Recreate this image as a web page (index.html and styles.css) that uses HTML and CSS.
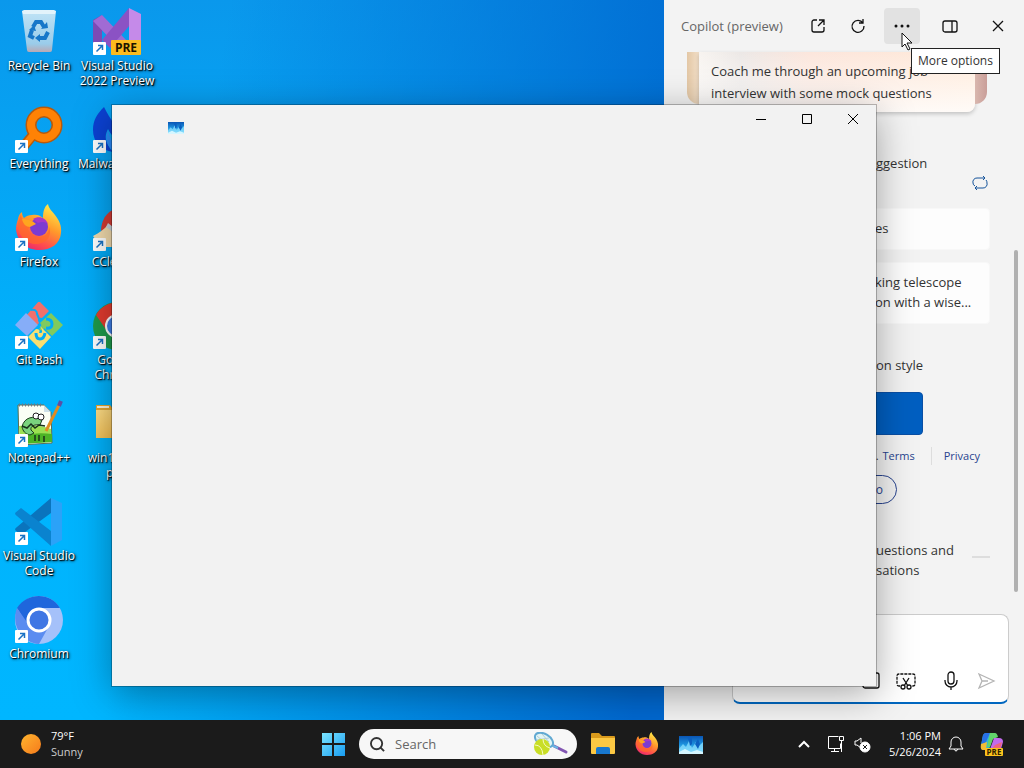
FILE: index.html
```html
<!DOCTYPE html>
<html lang="en">
<head>
    <meta charset="UTF-8">
    <meta name="viewport" content="width=device-width, initial-scale=1.0">
    <title>Desktop</title>
    <link rel="stylesheet" href="styles.css">
</head>
<body>
    <!-- Shared shapes -->
    <svg class="defs" aria-hidden="true">
        <defs>
            <linearGradient id="fox" x1="0.8" y1="0" x2="0.3" y2="1">
                <stop offset="0" stop-color="#fff04a"/>
                <stop offset="0.45" stop-color="#ff9a2b"/>
                <stop offset="0.8" stop-color="#ff4a4f"/>
                <stop offset="1" stop-color="#e8296e"/>
            </linearGradient>
            <linearGradient id="tile" x1="0" y1="0" x2="0" y2="1">
                <stop offset="0" stop-color="#0a55b4"/>
                <stop offset="0.5" stop-color="#1e96e0"/>
                <stop offset="1" stop-color="#9be8ff"/>
            </linearGradient>
            <linearGradient id="win" x1="0" y1="0" x2="1" y2="1">
                <stop offset="0" stop-color="#7be4ff"/>
                <stop offset="1" stop-color="#189cf0"/>
            </linearGradient>
            <linearGradient id="sun" x1="0" y1="0" x2="1" y2="1">
                <stop offset="0" stop-color="#ffb52e"/>
                <stop offset="1" stop-color="#f57a1c"/>
            </linearGradient>
            <linearGradient id="bin" x1="0" y1="0" x2="0" y2="1">
                <stop offset="0" stop-color="#bfe3f6"/>
                <stop offset="0.8" stop-color="#9accea"/>
                <stop offset="1" stop-color="#b9a9b4"/>
            </linearGradient>
            <linearGradient id="yellow" x1="0" y1="0" x2="1" y2="1">
                <stop offset="0" stop-color="#ffe08a"/>
                <stop offset="1" stop-color="#efae35"/>
            </linearGradient>
            <symbol id="shortcut" viewBox="0 0 13 13">
                <rect width="13" height="13" rx="1" fill="#fff"/>
                <path d="M3.5 9.5 9 4M5 3.5h4.5V8" fill="none" stroke="#1a72c4" stroke-width="1.5"/>
            </symbol>
            <symbol id="firefox" viewBox="0 0 48 48">
                <path d="M3 15c1-5 3-6 4-7 0 3 1 5 2 6 2-2 5-3 8-3 4-1 8 0 11 3 0-6 1-11 5-14 1 5 4 7 7 11 4 5 7 11 6 18C45 40 36 46 24 46 11 46 2 37 1 25c0-4 1-7 2-10z" fill="url(#fox)"/>
                <path d="M6 10c0 4 2 6 4 6 4-1 7 1 10 4l-7 5c2 5 6 8 11 8 6 0 10-4 10-10 4 10-4 17-13 17S2 32 3 19z" fill="#ff6a28" opacity="0.7"/>
                <circle cx="24" cy="23" r="9" fill="#7c3bd0"/>
                <path d="M18 15c6-4 13-1 15 5-4-3-7-2-10-1z" fill="#a638c9"/>
                <path d="M7 15c5 0 10 1 14 5l-6 3c-4 0-7-3-8-8z" fill="#ffa51f"/>
            </symbol>
            <symbol id="photo" viewBox="0 0 24 18">
                <rect width="24" height="18" fill="url(#tile)"/>
                <path d="M0 13l4-5 3 3 3-6 3 7 4-6 3 4 4-4v12H0z" fill="#7fd8fb" opacity="0.85"/>
                <path d="M0 16l6-3 6 3 6-2 6 2v2H0z" fill="#d5f6ff"/>
                <path d="M8 1l2 4 1 5 2-2V2zM16 8l3-5 2 5-2 5z" fill="#0b5fc0"/>
            </symbol>
        </defs>
    </svg>

    <main class="desktop">
        <!-- Desktop shortcuts -->
        <nav class="icons" aria-label="Desktop icons">
            <button class="shortcut" type="button">
                <svg viewBox="0 0 48 48">
                    <path d="M7 3h34l-4 39q0 2-2 2H14q-2 0-2-2z" fill="url(#bin)"/>
                    <path d="M7 3l2-1h30l2 1-1 3H8z" fill="#e2f3fb"/>
                    <g fill="none" stroke="#1777c9" stroke-width="4">
                        <path d="M18 19l3-5h5l3 5M33 24l-3 6h-6M19 30l-4-2 2-6"/>
                    </g>
                    <path d="M26 21l7-1-1-6zM25 26v8l-5-4zM14 22l7 1-2-6z" fill="#1777c9"/>
                </svg>
                <span>Recycle Bin</span>
            </button>
            <button class="shortcut" type="button">
                <svg viewBox="0 0 48 48">
                    <path d="M0 12l9-5v28l-9 2z" fill="#7c4bb5"/>
                    <path d="M0 13l9-6 27 28-7 8z" fill="#a06bd4"/>
                    <path d="M9 32 36 0l1 17-20 23z" fill="#8b52c4"/>
                    <path d="M36 0l12 6v34H36z" fill="#c58ae9"/>
                    <use href="#shortcut" y="34" width="13" height="13"/>
                    <rect x="18" y="32" width="30" height="15" rx="1" fill="#fcbb1f"/>
                    <text x="33" y="44" class="pre-large">PRE</text>
                </svg>
                <span>Visual Studio 2022 Preview</span>
            </button>
            <button class="shortcut" type="button">
                <svg viewBox="0 0 48 48">
                    <path d="M18 29l-9 11" stroke="#b65a0d" stroke-width="10"/>
                    <circle cx="29" cy="19" r="13" fill="none" stroke="#b65a0d" stroke-width="11"/>
                    <circle cx="29" cy="19" r="13" fill="none" stroke="#ff8205" stroke-width="8"/>
                    <path d="M19 28l-9 11" stroke="#ff8205" stroke-width="7"/>
                    <use href="#shortcut" y="34" width="13" height="13"/>
                </svg>
                <span>Everything</span>
            </button>
            <button class="shortcut" type="button">
                <svg viewBox="0 0 48 48">
                    <path d="M11 1C4 8 0 14 0 24c0 12 8 20 20 22-8-9-9-16-5-23 3 6 6 9 12 11C25 20 17 14 11 1z" fill="#0b42d4"/>
                    <path d="M15 24c-3 8-2 15 6 22h8c-8-6-12-12-14-22z" fill="#2c8bfa"/>
                    <use href="#shortcut" y="34" width="13" height="13"/>
                </svg>
                <span>Malwarebytes</span>
            </button>
            <button class="shortcut" type="button">
                <svg viewBox="0 0 48 48">
                    <use href="#firefox" width="48" height="48"/>
                    <use href="#shortcut" y="34" width="13" height="13"/>
                </svg>
                <span>Firefox</span>
            </button>
            <button class="shortcut" type="button">
                <svg viewBox="0 0 48 48">
                    <path d="M30 4C16 4 9 13 8 26l9 10 18 6z" fill="#d43b34"/>
                    <path d="M0 32c6-3 10-6 15-11l15 6-8 16H8z" fill="#f3dcae"/>
                    <path d="M15 19l5 4 8 4-4 4-11-8z" fill="#c9d3dc"/>
                    <use href="#shortcut" y="34" width="13" height="13"/>
                </svg>
                <span>CCleaner</span>
            </button>
            <button class="shortcut" type="button">
                <svg viewBox="0 0 48 48">
                    <path d="M24-1l10 10-7 7q-6-1-3 5l-3 3-10-10z" fill="#f0706c"/>
                    <path d="M16 8q6-1 6 4l3 7" fill="none" stroke="#00acf9" stroke-width="2"/>
                    <path d="M11 11l12 12-11 11L0 23z" fill="#86adf8"/>
                    <path d="M36 11l12 12-11 11-8-8q-1 5-5 1 4-4 1-6z" fill="#80ca5e"/>
                    <path d="M31 17q6 0 6 5t-6 4" fill="none" stroke="#00acf9" stroke-width="3"/>
                    <path d="M25 24l11 11-11 12-12-12 8-8q5 0 3 4 6 1 1-7z" fill="#f9df71"/>
                    <path d="M21 31q0 6 4 6t5-6" fill="none" stroke="#00acf9" stroke-width="3"/>
                    <use href="#shortcut" y="34" width="13" height="13"/>
                </svg>
                <span>Git Bash</span>
            </button>
            <button class="shortcut" type="button">
                <svg viewBox="0 0 48 48">
                    <circle cx="24" cy="24" r="24" fill="#1f9b4c"/>
                    <path d="M3 13C12-3 36-4 45 13H24L14 29z" fill="#e33b2e"/>
                    <path d="M45 13c7 16-3 34-21 35l10-18V13z" fill="#fdd03c"/>
                    <circle cx="24" cy="24" r="11" fill="#3f7fe8" stroke="#fff" stroke-width="2"/>
                    <use href="#shortcut" y="34" width="13" height="13"/>
                </svg>
                <span>Google Chrome</span>
            </button>
            <button class="shortcut" type="button">
                <svg viewBox="0 0 48 48">
                    <path d="M3 5h26l7 7 1 31-33 2z" fill="#fafff5" stroke="#5a6d52"/>
                    <path d="M4 26q15-3 32 3v13L5 44z" fill="#9be052"/>
                    <path d="M5 36q15-4 32-2v8L5 44z" fill="#4cb326"/>
                    <path d="M4 5h24" stroke="#6f7c86" stroke-width="3" stroke-dasharray="1 2"/>
                    <path d="M29 5v7h7z" fill="#cde0e8"/>
                    <path d="M7 27c2-10 12-12 20-7l-2 5c-5-1-10 1-9 5l3 3-4 2c-5-1-7-4-8-8z" fill="#7ad37d" stroke="#1d3c1c"/>
                    <path d="M7 26l5 2 4-4 4 4 4-3 6 1M20 35v6m4-6v6m5-5v6" fill="none" stroke="#18321a" stroke-width="1.5"/>
                    <circle cx="21" cy="16" r="3" fill="#fff" stroke="#222"/>
                    <circle cx="26" cy="17" r="3" fill="#fff" stroke="#222"/>
                    <path d="M45 3 31 31" stroke="#e08a21" stroke-width="3"/>
                    <path d="M46 1l-2 5" stroke="#5a4fa6" stroke-width="4"/>
                    <use href="#shortcut" y="34" width="13" height="13"/>
                </svg>
                <span>Notepad++</span>
            </button>
            <button class="shortcut" type="button">
                <svg viewBox="0 0 48 48">
                    <path d="M3 5h14l4 5h24v28H3z" fill="#e5a52e"/>
                    <path d="M3 10h42v28H3z" fill="url(#yellow)"/>
                    <path d="M4 7h12" stroke="#fff4d8" stroke-width="2"/>
                </svg>
                <span>win11-app<br>pics</span>
            </button>
            <button class="shortcut" type="button">
                <svg viewBox="0 0 48 48">
                    <path d="M36 0l11 5v37l-11 6z" fill="#2ba2f8"/>
                    <path d="M36 0v15L6 37l-6-5q0-2 2-3z" fill="#0a74bd"/>
                    <path d="M0 15l6-5 30 23v15L2 18q-2-1-2-3z" fill="#0a83cf"/>
                    <use href="#shortcut" y="34" width="13" height="13"/>
                </svg>
                <span>Visual Studio Code</span>
            </button>
            <span></span>
            <button class="shortcut" type="button">
                <svg viewBox="0 0 48 48">
                    <circle cx="24" cy="24" r="24" fill="#a5c1fa"/>
                    <path d="M2 12C12-4 36-4 45 12H24L13 30z" fill="#1f66dc"/>
                    <path d="M2 12c-6 15 3 34 22 36l10-18-20-1z" fill="#5b8cf0"/>
                    <circle cx="24" cy="24" r="11" fill="#3f76e4" stroke="#fff" stroke-width="3"/>
                    <use href="#shortcut" y="34" width="13" height="13"/>
                </svg>
                <span>Chromium</span>
            </button>
        </nav>

        <!-- Copilot side panel -->
        <aside class="copilot">
            <header class="copilot-header">
                <h1>Copilot (preview)</h1>
                <div class="copilot-tools">
                    <button type="button" aria-label="Open in browser">
                        <svg viewBox="0 0 16 16"><path d="M7 2H4a2 2 0 0 0-2 2v8a2 2 0 0 0 2 2h8a2 2 0 0 0 2-2V9M9 2h5v5M14 2 8 8"/></svg>
                    </button>
                    <button type="button" aria-label="Refresh">
                        <svg viewBox="0 0 16 16"><path d="M13 5a6 6 0 1 0 1 3M13 1v4H9"/></svg>
                    </button>
                </div>
                <div class="copilot-tools wide">
                    <button type="button" class="active" aria-label="More">
                        <svg viewBox="0 0 16 16"><path d="M2 8h0M8 8h0M14 8h0" stroke-width="3" stroke-linecap="round"/></svg>
                        <span class="tooltip">More options</span>
                        <svg class="cursor" viewBox="0 0 12 19"><path d="M1 1v14l3-3 3 6 2-1-3-6h5z"/></svg>
                    </button>
                    <button type="button" aria-label="Dock panel">
                        <svg viewBox="0 0 16 16"><rect x="1" y="3" width="14" height="11" rx="2"/><path d="M10 3v11"/></svg>
                    </button>
                    <button type="button" aria-label="Close panel">
                        <svg viewBox="0 0 16 16"><path d="M3 3l10 10M13 3 3 13"/></svg>
                    </button>
                </div>
            </header>

            <div class="copilot-body">
                <div class="carousel">
                    <span class="peek peach"></span>
                    <p class="prompt">Coach me through an upcoming job interview with some mock questions</p>
                    <span class="peek rose"></span>
                </div>

                <div class="suggest">
                    <p class="line">ggestion</p>
                    <button type="button" class="swap" aria-label="Other suggestions">
                        <svg viewBox="0 0 16 16"><path d="M11 1l2 2-2 2M13 3H5a4 4 0 0 0-4 5q0 2 2 3M5 11l-2 2 2 2M3 13h8a4 4 0 0 0 4-5q0-2-1-3"/></svg>
                    </button>
                </div>
                <button type="button" class="card">es</button>
                <button type="button" class="card">king telescope<br>on with a wise...</button>

                <p class="line style-title">on style</p>
                <button type="button" class="style-choice" aria-label="Conversation style"></button>
                <div class="links">
                    <span>.</span>
                    <a href="#">Terms</a>
                    <a href="#" class="privacy">Privacy</a>
                </div>
                <button type="button" class="pill">o</button>
                <div class="notice">
                    <p class="line">uestions and<br>sations</p>
                    <span class="dash"></span>
                </div>
                <span class="scrollbar"></span>
            </div>

            <form class="composer">
                <textarea aria-label="Ask me anything"></textarea>
                <div class="composer-tools">
                    <button type="button" aria-label="Add an image">
                        <svg viewBox="0 0 20 20"><rect x="2" y="2" width="16" height="15" rx="2"/></svg>
                    </button>
                    <button type="button" aria-label="Screenshot">
                        <svg viewBox="0 0 20 20"><path d="M4 15H3q-2 0-2-2V5q0-2 2-2h14q2 0 2 2v8q0 2-2 2h-1" stroke-dasharray="3 1"/><path d="M7 7l5 8M13 7l-5 8"/><circle cx="7" cy="16" r="2"/><circle cx="13" cy="16" r="2"/></svg>
                    </button>
                    <button type="button" class="mic" aria-label="Use microphone">
                        <svg viewBox="0 0 20 20"><rect x="7" y="1" width="6" height="12" rx="3"/><path d="M4 9v1a6 6 0 0 0 12 0V9M10 16v3"/></svg>
                    </button>
                    <button type="submit" class="send" aria-label="Submit">
                        <svg viewBox="0 0 20 20"><path d="M3 3l15 7-15 7 3-7zM6 10h6"/></svg>
                    </button>
                </div>
            </form>
        </aside>

        <!-- App window that is still loading -->
        <section class="window" aria-label="App window">
            <header class="titlebar">
                <svg class="app-icon" viewBox="0 0 24 18"><use href="#photo" width="24" height="18"/></svg>
                <div class="window-buttons">
                    <button type="button" aria-label="Minimize"><svg viewBox="0 0 12 12"><path d="M1 6.5h10"/></svg></button>
                    <button type="button" aria-label="Maximize"><svg viewBox="0 0 12 12"><path d="M1.5 1.5h9v9h-9z"/></svg></button>
                    <button type="button" aria-label="Close"><svg viewBox="0 0 12 12"><path d="M1 1l10 10M11 1 1 11"/></svg></button>
                </div>
            </header>
        </section>
    </main>

    <!-- Taskbar -->
    <footer class="taskbar">
        <button type="button" class="weather">
            <svg viewBox="0 0 20 20"><circle cx="10" cy="10" r="10" fill="url(#sun)"/></svg>
            <span>79°F<br><span class="dim">Sunny</span></span>
        </button>
        <div class="apps">
            <button type="button" aria-label="Start">
                <svg viewBox="0 0 28 28"><path d="M3 3h10v10H3zM15 3h11v10H15zM3 15h10v11H3zM15 15h11v11H15z" fill="url(#win)"/></svg>
            </button>
            <label class="search">
                <svg class="lens" viewBox="0 0 16 16"><circle cx="7" cy="7" r="6"/><path d="M11 11l4 4"/></svg>
                <input type="search" placeholder="Search" aria-label="Search">
                <svg class="tennis" viewBox="0 0 36 24">
                    <path d="M21 14l12 6" stroke="#8256b2" stroke-width="3" stroke-linecap="round"/>
                    <path d="M18 13l7 3" stroke="#68b7e5" stroke-width="2"/>
                    <ellipse cx="11" cy="8" rx="10" ry="6" transform="rotate(32 11 8)" fill="#e2f4f4" stroke="#62a9d2" stroke-width="2"/>
                    <path d="M4 4l12 10M9 2l7 8M3 8l13-2" stroke="#b4ccd6"/>
                    <circle cx="9" cy="15" r="8" fill="#c9de26"/>
                    <path d="M2 13q7 0 8 10M10 7q0 7 7 9" fill="none" stroke="#f7fbc2"/>
                </svg>
            </label>
            <div class="pinned">
                <button type="button" aria-label="File Explorer">
                    <svg viewBox="0 0 28 28"><path d="M2 4q0-1 1-1h7l3 3h12q1 0 1 1v6H2z" fill="#d99a1c"/><path d="M2 8h24v15q0 1-1 1H3q-1 0-1-1z" fill="#fcc843"/><path d="M7 24v-5q0-2 2-2h10q2 0 2 2v5z" fill="#1878cf"/></svg>
                </button>
                <button type="button" aria-label="Firefox">
                    <svg viewBox="-4 -4 56 56"><use href="#firefox" width="48" height="48"/></svg>
                </button>
                <button type="button" aria-label="Photos">
                    <svg viewBox="0 0 28 28"><use href="#photo" x="2" y="6" width="24" height="18"/></svg>
                </button>
            </div>
        </div>
        <div class="tray">
            <button type="button" class="chevron" aria-label="Show hidden icons"><svg viewBox="0 0 18 18"><path d="M4 12l5-5 5 5" stroke-width="2"/></svg></button>
            <button type="button" aria-label="Network"><svg viewBox="0 0 18 18"><path d="M11.5 1.500h-10v12h12v-5M4 16.500h8M7.500 14v2M12.500 1.500h4v4h-4zM14.500 6v11"/></svg></button>
            <button type="button" aria-label="Volume muted"><svg viewBox="0 0 18 18"><path d="M8 13 4 10H2V6h2l4-3v5"/><circle cx="12" cy="12" r="5" fill="#fff"/><path d="M10 10l4 4M14 10l-4 4" class="cross"/></svg></button>
            <time class="clock">1:06 PM<br>5/26/2024</time>
            <button type="button" class="bell" aria-label="Notifications"><svg viewBox="0 0 18 18"><path d="M2 14l2-3V7a5 5 0 0 1 10 0v4l2 3zM7 14q2 4 4 0"/></svg></button>
            <button type="button" class="copilot-button" aria-label="Copilot">
                <svg viewBox="0 0 28 28">
                    <path d="M7 3h9l-5 17H6q-3 0-3-3V15L5 5z" fill="#32b9d4"/>
                    <path d="M7 3h5l-4 9-5 4 2-11z" fill="#2870e8"/>
                    <path d="M3 14l6-2-1 8H5q-3 0-2-6z" fill="#f2bd35"/>
                    <path d="M12 3h5q2 0 3 4l-5 2-3 8H9z" fill="#62d46b"/>
                    <path d="M16 8h5q4 0 4 4l-2 7H12z" fill="#c26bec"/>
                    <path d="M17 15l7-3-2 8h-9z" fill="#ee6580"/>
                    <rect x="7" y="18" width="18" height="8" rx="1" fill="#fcc31d"/>
                    <text x="16" y="25" class="pre-small">PRE</text>
                </svg>
            </button>
        </div>
    </footer>
</body>
</html>
```

FILE: styles.css
```css
* {
    box-sizing: border-box;
}

body {
    margin: 0;
    min-height: 100vh;
    display: flex;
    flex-direction: column;
    font-family: "Open Sans", "Noto Sans", sans-serif;
    font-size: 13px;
    color: #333;
}

h1, p {
    margin: 0;
    font-weight: normal;
}

button {
    padding: 0;
    border: none;
    background: none;
    font: inherit;
    color: inherit;
}

.defs {
    position: absolute;
    width: 0;
    height: 0;
}

/* Desktop */
.desktop {
    position: relative;
    flex: 1;
    display: flex;
    justify-content: space-between;
    overflow: hidden;
    background: linear-gradient(100deg, rgba(0, 100, 208, 0) 20%, #0068d0 66%), linear-gradient(#0a98ec, #00b2fc 50%, #00b6ff);
}

.icons {
    display: grid;
    grid-template-columns: 78px 78px;
    grid-auto-rows: 98px;
    align-content: start;
}

.shortcut {
    display: flex;
    flex-direction: column;
    align-items: center;
    padding-top: 8px;
    font-size: 12px;
    line-height: 15px;
    color: #fff;
    text-shadow: 1px 1px 1px #000, 1px 1px 3px #000;
}

.shortcut svg {
    width: 48px;
    height: 48px;
    margin-bottom: 2px;
    flex: none;
    text-shadow: none;
}

.pre-large {
    font: bold 12px "Open Sans", sans-serif;
    text-anchor: middle;
    fill: #1c1400;
}

.pre-small {
    font: bold 8px "Open Sans", sans-serif;
    text-anchor: middle;
    fill: #2c2000;
}

/* Copilot panel */
.copilot {
    display: flex;
    flex-direction: column;
    width: 360px;
    background: #f3f3f3;
}

.copilot svg {
    fill: none;
    stroke: #111;
}

.copilot-header {
    display: flex;
    align-items: center;
    gap: 8px;
    height: 52px;
    padding: 0 8px 0 17px;
}

.copilot-header h1 {
    flex: 1;
    font-size: 13px;
    color: #666;
}

.copilot-tools {
    display: flex;
    gap: 4px;
}

.copilot-tools.wide {
    gap: 12px;
}

.copilot-tools button {
    position: relative;
    width: 36px;
    height: 36px;
    border-radius: 4px;
}

.copilot-tools button > svg {
    display: block;
    width: 16px;
    height: 16px;
    margin: 0 auto;
    stroke-width: 1.3;
}

.copilot-tools .active {
    background: #e2e2e2;
}

.copilot-tools button .cursor {
    position: absolute;
    z-index: 3;
    left: 17px;
    top: 24px;
    width: 12px;
    height: 19px;
    margin: 0;
    fill: #fff;
    stroke-width: 1;
}

.tooltip {
    position: absolute;
    z-index: 2;
    left: 27px;
    top: 40px;
    padding: 3px 6px;
    border: 1px solid #222;
    background: #fff;
    font-size: 12px;
    line-height: 18px;
    white-space: nowrap;
}

.copilot-body {
    position: relative;
    flex: 1;
    padding: 0 34px 0 23px;
}

.carousel {
    display: flex;
    margin-right: 3px;
}

.peek {
    width: 12px;
    height: 52px;
}

.peach {
    border-radius: 0 0 0 12px;
    background: linear-gradient(to right, #e3c7a5, #f2dfc8);
}

.rose {
    border-radius: 0 0 12px 0;
    background: linear-gradient(to right, #d9b7ae, #c99e99);
}

.prompt {
    flex: 1;
    padding: 8px 10px 8px 12px;
    border-radius: 0 0 8px 8px;
    background: linear-gradient(rgba(255, 255, 255, 0), rgba(255, 255, 255, 0.8)), linear-gradient(to right, #f8f4f0, #ece8e6 15%, #fce6dc 40%, #ffead9);
    box-shadow: 0 2px 4px rgba(0, 0, 0, 0.2);
    line-height: 22px;
}

.line {
    padding-left: 189px;
    line-height: 20px;
}

.suggest {
    display: flex;
    justify-content: space-between;
    align-items: flex-start;
    height: 96px;
    padding-top: 41px;
}

.swap {
    width: 20px;
    padding-top: 22px;
}

.copilot .swap svg {
    width: 16px;
    height: 16px;
    stroke: #14539a;
}

.card {
    display: block;
    width: 100%;
    margin-bottom: 12px;
    padding: 9px 10px 11px 187px;
    border: 1px solid #f8f8f8;
    border-radius: 4px;
    background: #fdfdfd;
    line-height: 20px;
    text-align: left;
}

.style-title {
    padding-top: 19px;
}

.style-choice {
    display: block;
    width: 236px;
    height: 43px;
    margin-top: 17px;
    border: 1px solid #0a4fa4;
    border-radius: 4px;
    background: #005fc1;
}

.links {
    display: flex;
    justify-content: flex-end;
    margin: 12px 10px 10px 0;
    font-size: 11px;
    line-height: 18px;
    gap: 4px;
}

.links a {
    color: #28438f;
    text-decoration: none;
}

.links .privacy {
    margin-left: 12px;
    padding-left: 12px;
    border-left: 1px solid #ddd;
}

.pill {
    display: block;
    width: 210px;
    height: 29px;
    padding-right: 13px;
    border: 1px solid #28438f;
    border-radius: 15px;
    color: #28438f;
    font-size: 12px;
    text-align: right;
}

.notice {
    display: flex;
    justify-content: space-between;
    align-items: flex-start;
    margin-top: 36px;
}

.dash {
    width: 18px;
    height: 2px;
    margin-top: 16px;
    background: #ddd;
}

.scrollbar {
    position: absolute;
    top: 198px;
    right: 6px;
    bottom: 22px;
    width: 4px;
    border-radius: 2px;
    background: #b0b0b0;
}

.composer {
    display: flex;
    flex-direction: column;
    height: 90px;
    margin: 0 15px 16px 68px;
    border: 1px solid #ccc;
    border-bottom: 2px solid #0067c0;
    border-radius: 8px;
    background: #fff;
    overflow: hidden;
}

.composer textarea {
    flex: 1;
    min-height: 0;
    border: none;
    background: none;
    resize: none;
    font: inherit;
}

.composer-tools {
    display: flex;
    justify-content: flex-end;
    gap: 15px;
    padding: 0 12px 11px;
}

.composer-tools svg {
    display: block;
    width: 20px;
    height: 20px;
    stroke-width: 1.3;
}

.composer-tools .mic {
    margin-left: 10px;
}

.composer .send svg {
    stroke: #b5b5b5;
}

/* Loading window */
.window {
    position: absolute;
    z-index: 1;
    left: 112px;
    right: 148px;
    top: 105px;
    bottom: 34px;
    background: #f2f2f2;
    box-shadow: 0 0 0 1px rgba(0, 0, 0, 0.25), 0 8px 36px rgba(0, 0, 0, 0.35);
}

.titlebar {
    display: flex;
    justify-content: space-between;
    align-items: flex-start;
    padding-left: 56px;
}

.app-icon {
    width: 16px;
    height: 12px;
    margin-top: 17px;
}

.window-buttons {
    display: flex;
}

.window-buttons button {
    width: 46px;
    height: 28px;
}

.window-buttons svg {
    display: block;
    width: 12px;
    height: 12px;
    margin: 0 auto;
    fill: none;
    stroke: #000;
}

/* Taskbar */
.taskbar {
    display: grid;
    grid-template-columns: 1fr auto 1fr;
    align-items: center;
    height: 48px;
    background: #1b1b1b;
    color: #fff;
    font-size: 11px;
    line-height: 16px;
}

.weather {
    display: flex;
    align-items: center;
    gap: 10px;
    padding-left: 21px;
    text-align: left;
}

.weather svg {
    width: 20px;
    height: 20px;
}

.dim {
    color: #ccc;
}

.apps {
    display: flex;
    align-items: center;
    gap: 12px;
}

.apps button svg {
    display: block;
    width: 28px;
    height: 28px;
}

.search {
    display: flex;
    align-items: center;
    gap: 10px;
    width: 218px;
    height: 30px;
    padding: 0 8px 0 11px;
    border-radius: 15px;
    background: #f7f7f7;
}

.search input {
    flex: 1;
    min-width: 0;
    padding: 0;
    border: none;
    background: none;
    font: inherit;
    font-size: 13px;
}

.search input::placeholder {
    color: #666;
}

.lens {
    width: 15px;
    height: 15px;
    fill: none;
    stroke: #333;
    stroke-width: 2;
}

.tennis {
    width: 36px;
    height: 24px;
}

.pinned {
    display: flex;
    gap: 16px;
}

.tray {
    display: flex;
    justify-content: flex-end;
    align-items: center;
    padding-right: 18px;
}

.tray svg {
    display: block;
    width: 18px;
    height: 18px;
    fill: none;
    stroke: #fff;
}

.tray button {
    margin-right: 8px;
}

.tray .chevron {
    margin-right: 14px;
}

.tray .cross {
    stroke: #1b1b1b;
}

.tray .clock {
    min-width: 56px;
    margin: 0 6px;
    text-align: right;
}

.tray .bell {
    margin-right: 13px;
}

.tray .copilot-button {
    margin-right: 0;
}

.tray .copilot-button svg {
    width: 28px;
    height: 28px;
    stroke: none;
}
```
